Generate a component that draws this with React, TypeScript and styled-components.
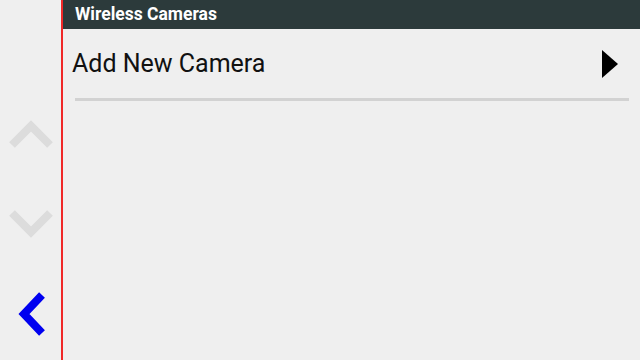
import React from "react";
import styled, { createGlobalStyle } from "styled-components";

const GlobalStyle = createGlobalStyle`
  html, body {
    margin: 0;
    padding: 0;
    background: #efefef;
  }
  body {
    font-family: Roboto, "Liberation Sans", Arial, sans-serif;
  }
`;

const Screen = styled.div`
  display: flex;
  width: 640px;
  height: 360px;
  background: #efefef;
  overflow: hidden;
`;

const Sidebar = styled.div`
  width: 61px;
  flex: none;
  border-right: 2px solid #f02828;
  display: flex;
  flex-direction: column;
  align-items: center;
  padding-top: 120px;
  box-sizing: content-box;
`;

const NavButton = styled.button<{ $gap: number }>`
  border: 0;
  background: none;
  padding: 0;
  margin-bottom: ${({ $gap }) => $gap}px;
  display: flex;
  cursor: pointer;
`;

const Main = styled.div`
  flex: 1;
  display: flex;
  flex-direction: column;
`;

const Header = styled.div`
  height: 29px;
  background: #2c3a3b;
  color: #ffffff;
  font-weight: bold;
  font-size: 17.5px;
  line-height: 29px;
  padding-left: 12px;
`;

const MenuRow = styled.div`
  display: flex;
  align-items: center;
  justify-content: space-between;
  height: 69px;
  padding: 0 22px 0 9px;
  font-size: 25px;
  color: #111111;
`;

const Divider = styled.div`
  height: 3px;
  background: #d2d2d2;
  margin: 0 11px 0 12px;
`;

const Chevron = ({ d, color, w, h }: { d: string; color: string; w: number; h: number }) => (
  <svg width={w} height={h} viewBox={`0 0 ${w} ${h}`}>
    <path d={d} fill="none" stroke={color} strokeWidth={8} strokeLinecap="butt" strokeLinejoin="miter" />
  </svg>
);

export default function App() {
  return (
    <>
      <GlobalStyle />
      <Screen>
        <Sidebar>
          <NavButton $gap={62}>
            <Chevron w={44} h={28} d="M3 25 L22 6 L41 25" color="#dcdcdc" />
          </NavButton>
          <NavButton $gap={54}>
            <Chevron w={44} h={28} d="M3 3 L22 22 L41 3" color="#dcdcdc" />
          </NavButton>
          <NavButton $gap={0}>
            <Chevron w={28} h={44} d="M25 3 L7 22 L25 41" color="#0000f0" />
          </NavButton>
        </Sidebar>
        <Main>
          <Header>Wireless Cameras</Header>
          <MenuRow>
            <span>Add New Camera</span>
            <svg width="16" height="28" viewBox="0 0 16 28">
              <path d="M0 0 L16 14 L0 28 Z" fill="#000" />
            </svg>
          </MenuRow>
          <Divider />
        </Main>
      </Screen>
    </>
  );
}
